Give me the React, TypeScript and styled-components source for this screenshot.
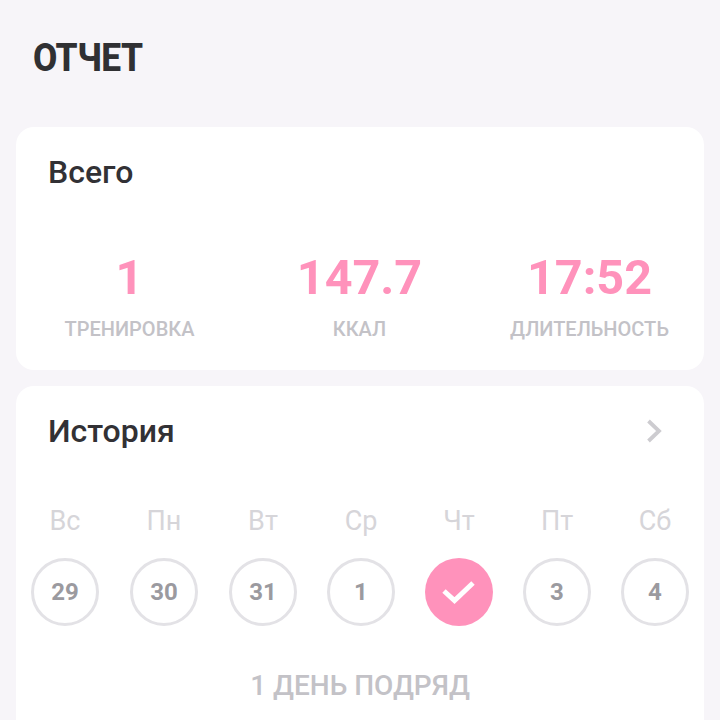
import React from 'react';
import styled, {createGlobalStyle} from 'styled-components';

const days = [
    {name: 'Вс', num: '29'},
    {name: 'Пн', num: '30'},
    {name: 'Вт', num: '31'},
    {name: 'Ср', num: '1'},
    {name: 'Чт', num: '2', done: true},
    {name: 'Пт', num: '3'},
    {name: 'Сб', num: '4'},
];

const stats = [
    {value: '1', label: 'ТРЕНИРОВКА'},
    {value: '147.7', label: 'ККАЛ'},
    {value: '17:52', label: 'ДЛИТЕЛЬНОСТЬ'},
];

export default function App() {
    return (
        <Page>
            <GlobalStyle/>
            <Title>ОТЧЕТ</Title>
            <TotalCard>
                <CardTitle>Всего</CardTitle>
                <Stats>
                    {stats.map(s => (
                        <Stat key={s.label}>
                            <Value>{s.value}</Value>
                            <Label>{s.label}</Label>
                        </Stat>
                    ))}
                </Stats>
            </TotalCard>
            <HistoryCard>
                <HistoryHeader>
                    <HistoryTitle>История</HistoryTitle>
                    <svg width="18" height="26" viewBox="0 0 18 26" fill="none">
                        <path d="M2.5 3 L13 13 L2.5 23" stroke="#cdccd0" strokeWidth="3.8"/>
                    </svg>
                </HistoryHeader>
                <Week>
                    {days.map(d => (
                        <Day key={d.name}>
                            <DayName>{d.name}</DayName>
                            <Circle $done={d.done}>
                                {d.done ? (
                                    <svg width="34" height="26" viewBox="0 0 34 26" fill="none">
                                        <path d="M2 12 L12.5 21.5 L31 4" stroke="#fff" strokeWidth="5"/>
                                    </svg>
                                ) : d.num}
                            </Circle>
                        </Day>
                    ))}
                </Week>
                <Streak>1 ДЕНЬ ПОДРЯД</Streak>
            </HistoryCard>
        </Page>
    );
}

const GlobalStyle = createGlobalStyle`
  html, body {
    margin: 0;
    padding: 0;
    height: 720px;
    overflow: hidden;
    background: #f7f5f9;
  }
`

const Page = styled.div`
  width: 720px;
  height: 720px;
  overflow: hidden;
  box-sizing: border-box;
  padding: 0 16px;
  display: flex;
  flex-direction: column;
  font-family: Roboto, sans-serif;
  background: #f7f5f9;
`

const Title = styled.h1`
  margin: 0;
  padding: 35px 0 0 17px;
  height: 127px;
  flex-shrink: 0;
  box-sizing: border-box;
  font-size: 39px;
  line-height: 46px;
  font-weight: 800;
  color: #303033;
  letter-spacing: -0.5px;
  transform: scaleX(0.905);
  transform-origin: 17px 0;
`

const Card = styled.section`
  background: #fff;
  border-radius: 18px;
  flex-shrink: 0;
`

const TotalCard = styled(Card)`
  height: 243px;
  box-sizing: border-box;
  padding: 27px 0 0;
`

const CardTitle = styled.h2`
  margin: 0 0 0 32px;
  font-size: 32px;
  line-height: 36px;
  font-weight: 500;
  color: #323135;
`

const Stats = styled.div`
  display: grid;
  grid-template-columns: repeat(3, 230px);
  justify-content: center;
  margin-top: 59px;
  padding-right: 1px;
`

const Stat = styled.div`
  display: flex;
  flex-direction: column;
  align-items: center;
`

const Value = styled.div`
  font-size: 48.5px;
  line-height: 58px;
  font-weight: 700;
  color: #ff92bb;
`

const Label = styled.div`
  margin-top: 10px;
  font-size: 20px;
  line-height: 24px;
  font-weight: 500;
  color: #c3c2c7;
`

const HistoryCard = styled(Card)`
  margin-top: 16px;
  height: 400px;
  box-sizing: border-box;
  padding: 27px 15px 0;
`

const HistoryHeader = styled.div`
  display: flex;
  justify-content: space-between;
  align-items: center;
  padding: 0 25px 0 17px;
  height: 36px;
`

const HistoryTitle = styled.h2`
  margin: 0;
  font-size: 32px;
  line-height: 36px;
  font-weight: 500;
  color: #323135;
`

const Week = styled.div`
  display: grid;
  grid-template-columns: 99px 99px 98px 98px 98px 98px 68px;
  margin-top: 56px;
`

const Day = styled.div`
  display: flex;
  flex-direction: column;
  align-items: center;
  gap: 21px;
  width: 68px;
`

const DayName = styled.div`
  font-size: 27px;
  line-height: 32px;
  color: #d6d5d9;
`

const Circle = styled.div<{ $done?: boolean }>`
  width: 68px;
  height: 68px;
  box-sizing: border-box;
  border-radius: 50%;
  display: flex;
  align-items: center;
  justify-content: center;
  border: ${p => (p.$done ? 'none' : '3px solid #e3e2e6')};
  background: ${p => (p.$done ? '#ff92bb' : '#fff')};
  font-size: 24px;
  font-weight: 700;
  color: #9b9a9f;
`

const Streak = styled.div`
  margin-top: 43px;
  text-align: center;
  font-size: 28px;
  line-height: 34px;
  font-weight: 500;
  color: #c3c2c7;
`
